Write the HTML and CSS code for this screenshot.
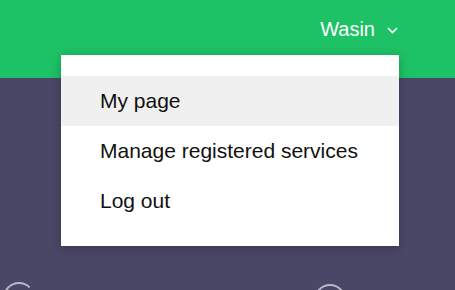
FILE: index.html
```html
<!DOCTYPE html>
<html>
<head>
  <meta charset="UTF-8">
  <title>Account menu</title>
  <link rel="stylesheet" href="styles.css">
</head>
<body>
  <header class="topbar">
    <div class="user-toggle">
      <span class="user-name">Wasin</span>
      <svg class="chevron" width="11" height="7" viewBox="0 0 11 7"><path d="M1 1 L5.5 5.5 L10 1" fill="none" stroke="#fff" stroke-width="1.6"/></svg>
    </div>
  </header>

  <main class="content">
    <span class="ring ring-left"></span>
    <span class="ring ring-right"></span>
  </main>

  <ul class="dropdown">
    <li class="dropdown-item active">My page</li>
    <li class="dropdown-item">Manage registered services</li>
    <li class="dropdown-item">Log out</li>
  </ul>
</body>
</html>
```

FILE: styles.css
```css
html, body {
  margin: 0;
  padding: 0;
  height: 100%;
}

body {
  background: #4a4766;
  font-family: "Liberation Sans", Arial, sans-serif;
  overflow: hidden;
  position: relative;
}

.topbar {
  height: 78px;
  background: #1dc266;
  display: flex;
  justify-content: flex-end;
  align-items: flex-start;
  padding-right: 57px;
}

.user-toggle {
  display: flex;
  align-items: center;
  gap: 12px;
  margin-top: 18px;
  color: #fff;
  font-size: 20px;
}

.chevron {
  margin-top: 2px;
}

.content {
  position: relative;
  height: 212px;
  overflow: hidden;
}

/* decorative rings peeking in at the bottom */
.ring {
  position: absolute;
  width: 28px;
  height: 28px;
  border: 2px solid #b9b7c9;
  border-radius: 50%;
}
.ring-left {
  left: 3px;
  top: 204px;
  border-right-color: transparent;
}
.ring-right {
  left: 314px;
  top: 206px;
}

.dropdown {
  position: absolute;
  left: 61px;
  top: 55px;
  width: 338px;
  margin: 0;
  padding: 21px 0 20px;
  list-style: none;
  background: #fff;
  box-shadow: 0 2px 10px rgba(0, 0, 0, 0.25);
}

.dropdown-item {
  height: 50px;
  line-height: 50px;
  padding-left: 39px;
  font-size: 21px;
  color: #111;
}

.dropdown-item.active {
  background: #f0f0f0;
}
```
